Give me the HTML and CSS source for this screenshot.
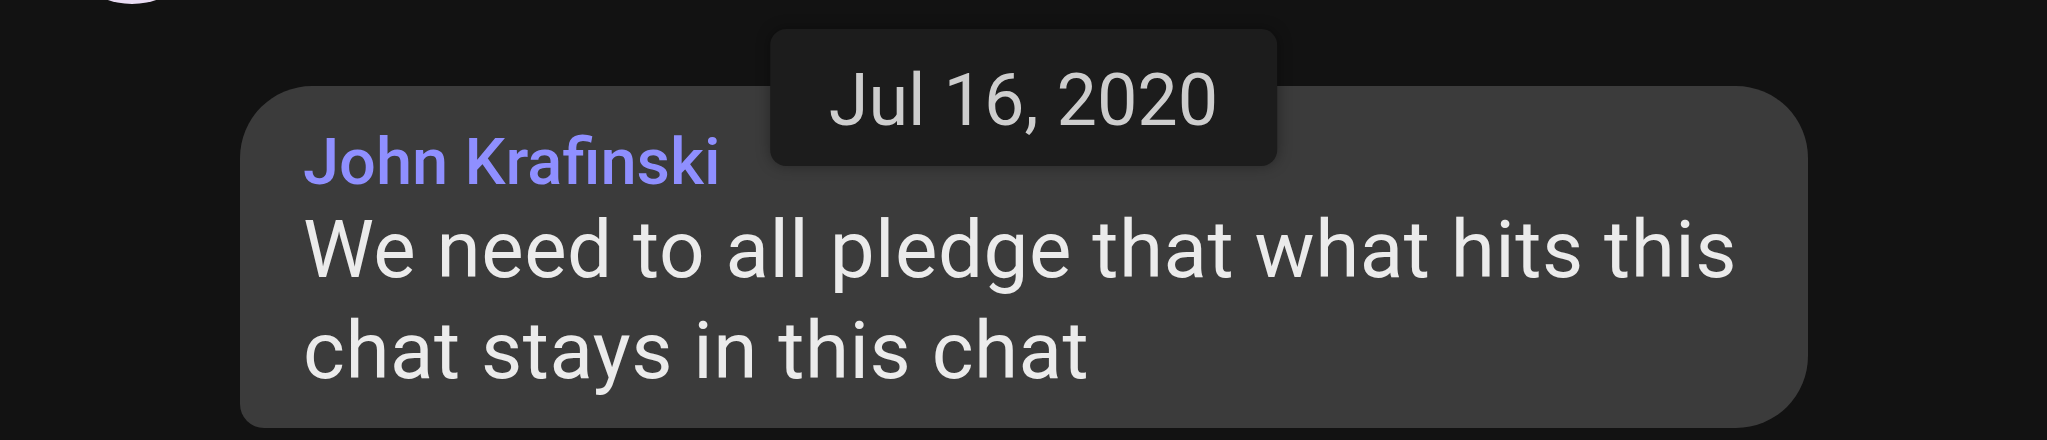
FILE: index.html
```html
<!DOCTYPE html>
<html lang="en">
<head>
    <meta charset="UTF-8">
    <meta name="viewport" content="width=device-width, initial-scale=1.0">
    <title>Chat</title>
    <link rel="stylesheet" href="styles.css">
</head>
<body>
    <div class="chat">
        <div class="prev-row">
            <div class="avatar"></div>
        </div>

        <div class="date-chip">Jul 16, 2020</div>

        <div class="bubble">
            <div class="sender">John Krafinski</div>
            <div class="text">We need to all pledge that what hits this chat stays in this chat</div>
        </div>
    </div>
</body>
</html>
```

FILE: styles.css
```css
html, body { margin: 0; padding: 0; background-color: #121212; }
body { font-family: Roboto, "Noto Sans", sans-serif; overflow: hidden; }
.chat { position: relative; height: 440px; }
.prev-row { display: flex; align-items: flex-end; height: 4px; padding-left: 57px; }
.avatar { flex-shrink: 0; width: 150px; height: 150px; border-radius: 50%; background-color: #e9dcf3; }
.date-chip { position: absolute; top: 29px; left: 50%; transform: translateX(-50%); z-index: 2; box-sizing: border-box; height: 137px; padding: 30px 59px 0; background-color: #1c1c1c; border-radius: 16px; color: #cdcdcd; font-size: 72px; line-height: 84px; white-space: nowrap; box-shadow: 0 0 14px rgba(0, 0, 0, 0.35); }
.bubble { box-sizing: border-box; width: 1568px; margin: 82px 0 0 240px; padding: 38px 63px 26px; background-color: #3b3b3b; border-radius: 72px 72px 72px 24px; }
.sender { color: #8f8fff; font-size: 65px; font-weight: 500; line-height: 76px; white-space: nowrap; }
.text { color: #ebebeb; font-size: 80px; letter-spacing: 0.5px; line-height: 101px; }
```
